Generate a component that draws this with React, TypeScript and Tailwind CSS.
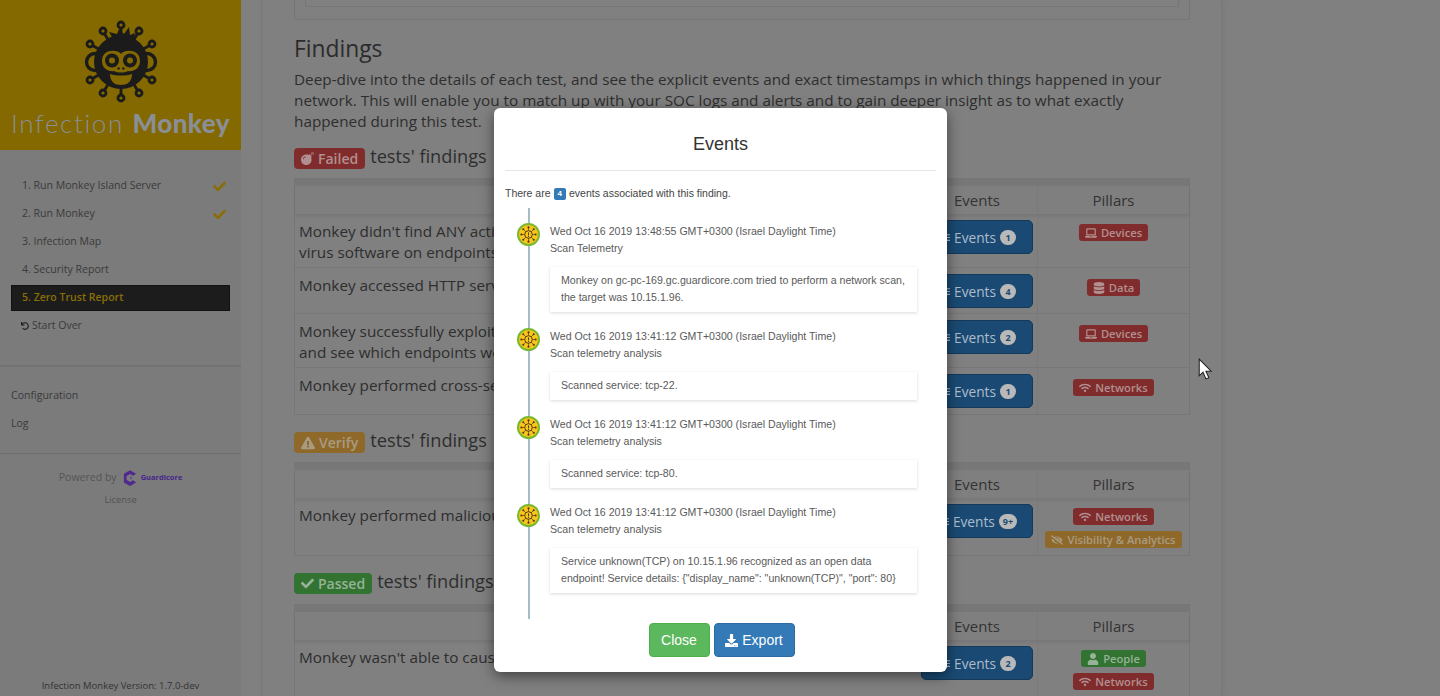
import React from 'react';
import {
  FaBomb,
  FaCheck,
  FaDatabase,
  FaDownload,
  FaExclamationTriangle,
  FaEyeSlash,
  FaLaptop,
  FaList,
  FaUndo,
  FaUser,
  FaWifi,
} from 'react-icons/fa';

const NODES = [
  [0, -37],
  [-18, -31],
  [18, -31],
  [-31, -18],
  [31, -18],
  [-31, 18],
  [31, 18],
  [-18, 31],
  [18, 31],
  [0, 36],
];

function MonkeyLogo() {
  const ink = '#1b1b1b';
  const bg = '#846800';
  return (
    <svg viewBox="-42 -42 84 84" className="w-[84px] h-[84px]">
      {NODES.map(([x, y]) => (
        <g key={`${x}${y}`}>
          <line x1={0} y1={0} x2={x} y2={y} stroke={ink} strokeWidth="2.8" />
          <circle cx={x} cy={y} r="3" fill={bg} stroke={ink} strokeWidth="2.8" />
        </g>
      ))}
      <circle cx={-26} cy={0} r="8.5" fill={bg} stroke={ink} strokeWidth="3.4" />
      <circle cx={26} cy={0} r="8.5" fill={bg} stroke={ink} strokeWidth="3.4" />
      <circle cx={0} cy={0} r="27" fill={ink} />
      <path d="M-9 -25 L-12 -30 L-4 -28 L-2 -33 L3 -28 L8 -35 L9 -27 L14 -29 L13 -21 Z" fill={ink} />
      <path
        d="M0 -8 C-4 -13 -19 -13 -19 -1 C-19 7 -12 10 -7 9 C-3 11 3 11 7 9 C12 10 19 7 19 -1 C19 -13 4 -13 0 -8 Z"
        fill={bg}
      />
      <circle cx={-9} cy={-1.5} r="7" fill={ink} />
      <circle cx={9} cy={-1.5} r="7" fill={ink} />
      <circle cx={-9} cy={-1.5} r="3" fill={bg} />
      <circle cx={9} cy={-1.5} r="3" fill={bg} />
      <circle cx={-2.4} cy={6.4} r="1.2" fill={ink} />
      <circle cx={2.4} cy={6.4} r="1.2" fill={ink} />
      <path d="M-11 12 C-5 14 5 14 11 12 C11 20 6 23 0 23 C-6 23 -11 20 -11 12 Z" fill={bg} />
    </svg>
  );
}

function GuardicoreMark() {
  return (
    <svg viewBox="0 0 16 18" className="w-[14px] h-[16px]">
      <path d="M8 0 L15 4 L11.5 6.5 L8 4.5 L4 7 V11 L8 13.5 L11.5 11.5 L15 14 L8 18 L1 14 V4 Z" fill="#4f2a8c" />
      <path d="M8 7 L11 9 L8 11 Z" fill="#6c47a8" />
    </svg>
  );
}

function TelemetryIcon() {
  const spokes = [
    [0, -7.5],
    [5.5, -5.5],
    [7.5, 0],
    [5.5, 5.5],
    [0, 7.5],
    [-5.5, 5.5],
    [-7.5, 0],
    [-5.5, -5.5],
  ];
  return (
    <div className="w-[23px] h-[23px] rounded-full bg-[#fdc51a] border-2 border-[#79b92f] flex items-center justify-center">
      <svg viewBox="-10 -10 20 20" className="w-[19px] h-[19px]">
        {spokes.map(([x, y]) => (
          <g key={`${x}${y}`}>
            <line x1={0} y1={0} x2={x} y2={y} stroke="#5b5320" strokeWidth="0.8" />
            <circle cx={x} cy={y} r="1.1" fill="#3f3a1c" />
          </g>
        ))}
        <circle cx={0} cy={0} r="4" fill="#fdc51a" stroke="#3f3a1c" strokeWidth="1" />
        <line x1={0} y1={-2.2} x2={0} y2={1} stroke="#3f3a1c" strokeWidth="1" />
        <circle cx={0} cy={2.3} r="0.6" fill="#3f3a1c" />
      </svg>
    </div>
  );
}

function NavItem({ label, done }: { label: string; done?: boolean }) {
  return (
    <div className="h-[28px] flex items-center justify-between pl-[22px] pr-[15px]">
      <span>{label}</span>
      {done && <FaCheck className="text-[#8a6e05] text-[13px]" />}
    </div>
  );
}

function Sidebar() {
  return (
    <aside className="w-[241px] h-full flex-none flex flex-col bg-[#7b7b7b] text-[10.55px] text-[#3a3a3a]">
      <div className="h-[150px] flex-none bg-[#846800] flex flex-col items-center pt-[20px]">
        <MonkeyLogo />
        <div className="mt-[3px] text-[26px] leading-[32px] tracking-[1.6px] whitespace-nowrap text-[#8a8f97] font-['Lato',sans-serif] font-light">
          Infection <span className="font-black tracking-[0.4px]">Monkey</span>
        </div>
      </div>
      <div className="pt-[22px]">
        <NavItem label="1. Run Monkey Island Server" done />
        <NavItem label="2. Run Monkey" done />
        <NavItem label="3. Infection Map" />
        <NavItem label="4. Security Report" />
        <div className="mx-[11px] h-[26px] my-px pl-[10px] flex items-center bg-[#1c1c1c] border border-[#111] text-[#8a6e05] font-semibold">
          5. Zero Trust Report
        </div>
        <div className="h-[28px] flex items-center gap-[3px] pl-[21px]">
          <FaUndo className="text-[8px] text-[#1f1f1f]" />
          <span>Start Over</span>
        </div>
      </div>
      <div className="mt-[25px] border-t-2 border-[#727272] pt-[15px] pb-[15px] pl-[11px]">
        <div className="h-[28px] flex items-center">Configuration</div>
        <div className="h-[28px] flex items-center">Log</div>
      </div>
      <div className="border-t border-[#6e6e6e] pt-[16px] flex flex-col items-center">
        <div className="h-[16px] flex items-center text-[#555]">
          Powered by
          <span className="ml-[6px] mr-[4px]">
            <GuardicoreMark />
          </span>
          <span className="text-[7.5px] font-bold text-[#47258a]">Guardicore</span>
        </div>
        <div className="mt-[7px] text-[9.3px] text-[#525252]">License</div>
      </div>
      <div className="mt-auto pb-[3px] text-center text-[9.5px] text-[#333]">Infection Monkey Version: 1.7.0-dev</div>
    </aside>
  );
}

type Pillar = 'Devices' | 'Data' | 'Networks' | 'Visibility & Analytics' | 'People';

function PillarBadge({ name }: { name: Pillar }) {
  const color =
    name === 'People'
      ? 'bg-[#327332] text-[#97b297]'
      : name === 'Visibility & Analytics'
        ? 'bg-[#8f692a] text-[#a99b82]'
        : 'bg-[#812c2c] text-[#b09090]';
  const icon =
    name === 'Devices' ? (
      <FaLaptop />
    ) : name === 'Data' ? (
      <FaDatabase />
    ) : name === 'Networks' ? (
      <FaWifi />
    ) : name === 'People' ? (
      <FaUser />
    ) : (
      <FaEyeSlash />
    );
  return (
    <span className={`${color} h-[17px] px-[6px] rounded-[3px] flex items-center gap-[4px] text-[11.2px] font-semibold whitespace-nowrap`}>
      <span className="text-[12px]">{icon}</span>
      {name}
    </span>
  );
}

type Row = {
  text: string;
  count: string;
  pillars: Pillar[];
  height: string;
  tight?: boolean;
};

function FindingsTable({ rows, className }: { rows: Row[]; className: string }) {
  return (
    <div className={`${className} border border-[#767676] text-[15.3px] leading-[21px] text-[#2e2e2e]`}>
      <div className="h-[7px] bg-[#777777]" />
      <div className="h-[29px] grid grid-cols-[622px_120px_1fr] bg-[#7f7f7f] border-b border-[#777777] shadow-[0_2px_3px_rgba(0,0,0,0.06)]">
        <div />
        <div className="flex items-center justify-center text-[15px] text-[#333]">Events</div>
        <div className="flex items-center justify-center text-[15px] text-[#333] border-l border-[#7a7a7a]">Pillars</div>
      </div>
      {rows.map((row, i) => (
        <div key={row.text} className={`${row.height} grid grid-cols-[622px_120px_1fr] ${i > 0 ? 'border-t border-[#787878]' : ''}`}>
          <div className={`pl-[4px] ${row.tight ? 'pt-[6px]' : 'pt-[7px]'}`}>{row.text}</div>
          <div className={`flex justify-center ${row.tight ? 'pt-[5px]' : 'pt-[6px]'}`}>
            <div className="w-[112px] h-[34px] pl-[3px] rounded-[5px] bg-[#1a4a73] border border-[#14395a] flex items-center justify-center gap-[4px] text-[13.7px] text-[#aebccb]">
              <FaList className="text-[9px]" />
              Events
              <span className="min-w-[16px] h-[15px] px-[4px] rounded-full bg-[#b9b9b9] text-[#1a4a73] text-[9px] font-bold flex items-center justify-center">
                {row.count}
              </span>
            </div>
          </div>
          <div className={`flex flex-col items-center gap-[6px] border-l border-[#7a7a7a] ${row.tight ? 'pt-[9px]' : 'pt-[11px]'}`}>
            {row.pillars.map((p) => (
              <PillarBadge key={p} name={p} />
            ))}
          </div>
        </div>
      ))}
    </div>
  );
}

function SectionTitle({ color, icon, label, className }: { color: string; icon: React.ReactNode; label: string; className: string }) {
  return (
    <div className={`${className} h-[21px] flex items-center gap-[5px] text-[18.2px] text-[#2e2e2e]`}>
      <span className={`${color} h-[21px] px-[7px] rounded-[4px] flex items-center gap-[4px] text-[14px] font-semibold`}>
        {icon}
        {label}
      </span>
      <span className="mb-[3px]">tests' findings</span>
    </div>
  );
}

function Main() {
  return (
    <main className="w-[960px] ml-[21px] h-full flex-none overflow-hidden border-x border-[#7a7a7a] px-[31px] shadow-[0_0_6px_rgba(0,0,0,0.08)]">
      <div className="h-[20px] border border-t-0 border-[#757575] rounded-b-[3px] px-[10px]">
        <div className="h-[7px] border border-t-0 border-[#767676]" />
      </div>
      <h2 className="mt-[12px] text-[22.8px] leading-[33px] text-[#2b2b2b]">Findings</h2>
      <p className="mt-[4px] text-[15.3px] leading-[21px] text-[#2e2e2e]">
        Deep-dive into the details of each test, and see the explicit events and exact timestamps in which things happened in your
        network. This will enable you to match up with your SOC logs and alerts and to gain deeper insight as to what exactly
        happened during this test.
      </p>
      <SectionTitle className="mt-[16px]" color="bg-[#812c2c] text-[#b09090]" icon={<FaBomb className="text-[13px]" />} label="Failed" />
      <FindingsTable
        className="mt-[9px]"
        rows={[
          {
            text: "Monkey didn't find ANY active endpoint security processes. Install and activate anti-virus software on endpoints.",
            count: '1',
            pillars: ['Devices'],
            height: 'h-[52px]',
            tight: true,
          },
          { text: 'Monkey accessed HTTP servers. Limit access to data by encrypting it in-transit.', count: '4', pillars: ['Data'], height: 'h-[46px]' },
          {
            text: 'Monkey successfully exploited endpoints. Check IDS/IPS logs to see activity recognized and see which endpoints were compromised.',
            count: '2',
            pillars: ['Devices'],
            height: 'h-[54px]',
          },
          { text: 'Monkey performed cross-segment communication. Check firewall rules and logs.', count: '1', pillars: ['Networks'], height: 'h-[47px]' },
        ]}
      />
      <SectionTitle className="mt-[17px]" color="bg-[#8f692a] text-[#a99b82]" icon={<FaExclamationTriangle className="text-[14px]" />} label="Verify" />
      <FindingsTable
        className="mt-[9px]"
        rows={[
          {
            text: 'Monkey performed malicious actions in the network. Check SOC logs and alerts.',
            count: '9+',
            pillars: ['Networks', 'Visibility & Analytics'],
            height: 'h-[56px]',
            tight: true,
          },
        ]}
      />
      <SectionTitle className="mt-[17px]" color="bg-[#327332] text-[#97b297]" icon={<FaCheck className="text-[13px]" />} label="Passed" />
      <FindingsTable
        className="mt-[10px]"
        rows={[
          {
            text: "Monkey wasn't able to cause denial of service.",
            count: '2',
            pillars: ['People', 'Networks'],
            height: 'h-[70px]',
            tight: true,
          },
        ]}
      />
    </main>
  );
}

type EventItem = { time: string; title: string; lines: string[] };

const EVENTS: EventItem[] = [
  {
    time: 'Wed Oct 16 2019 13:48:55 GMT+0300 (Israel Daylight Time)',
    title: 'Scan Telemetry',
    lines: ['Monkey on gc-pc-169.gc.guardicore.com tried to perform a network scan,', 'the target was 10.15.1.96.'],
  },
  {
    time: 'Wed Oct 16 2019 13:41:12 GMT+0300 (Israel Daylight Time)',
    title: 'Scan telemetry analysis',
    lines: ['Scanned service: tcp-22.'],
  },
  {
    time: 'Wed Oct 16 2019 13:41:12 GMT+0300 (Israel Daylight Time)',
    title: 'Scan telemetry analysis',
    lines: ['Scanned service: tcp-80.'],
  },
  {
    time: 'Wed Oct 16 2019 13:41:12 GMT+0300 (Israel Daylight Time)',
    title: 'Scan telemetry analysis',
    lines: ['Service unknown(TCP) on 10.15.1.96 recognized as an open data', 'endpoint! Service details: {"display_name": "unknown(TCP)", "port": 80}'],
  },
];

function EventsModal() {
  return (
    <div className="absolute left-[494px] top-[108px] w-[453px] h-[564px] rounded-[6px] bg-white shadow-[0_4px_14px_rgba(0,0,0,0.5)] px-[11px] font-['Liberation_Sans',Arial,sans-serif] text-[#333]">
      <h4 className="h-[63px] flex items-center justify-center pt-[11px] text-[18px] border-b border-[#e5e5e5]">Events</h4>
      <div className="h-[15px] mt-[15px] flex items-center text-[10.5px] text-[#444]">
        There are
        <span className="mx-[3px] h-[12px] px-[4px] rounded-[2px] bg-[#337ab7] text-white text-[8px] font-bold flex items-center">4</span>
        events associated with this finding.
      </div>
      <div className="relative mt-[7px] h-[411px] pl-[45px] pt-[14.5px] text-[10.6px] text-[#5a5a5a]">
        <div className="absolute left-[23px] top-0 bottom-0 w-[2px] bg-[#a5bcc7]" />
        {EVENTS.map((e) => (
          <div key={e.time + e.lines[0]} className="relative mb-[16px]">
            <div className="absolute left-[-33px] top-0">
              <TelemetryIcon />
            </div>
            <div className="leading-[17.5px]">{e.time}</div>
            <div className="leading-[17.5px]">{e.title}</div>
            <div className="mt-[9px] w-[367px] py-[5.5px] px-[11px] leading-[17px] bg-white shadow-[0_1px_3px_rgba(0,0,0,0.15)]">
              {e.lines.map((l) => (
                <div key={l} className="whitespace-nowrap">
                  {l}
                </div>
              ))}
            </div>
          </div>
        ))}
      </div>
      <div className="mt-[4px] pl-[2px] flex justify-center gap-[4px] text-[14px] text-white">
        <button className="w-[61px] h-[34px] rounded-[4px] bg-[#5cb85c] border border-[#4cae4c]">Close</button>
        <button className="w-[81px] h-[34px] rounded-[4px] bg-[#337ab7] border border-[#2e6da4] flex items-center justify-center gap-[4px]">
          <FaDownload className="text-[13px]" />
          Export
        </button>
      </div>
    </div>
  );
}

function Cursor() {
  return (
    <svg viewBox="0 0 14 22" className="absolute left-[1198px] top-[358px] w-[15px] h-[23px]">
      <path d="M1 1 V17 L4.6 13.6 L7.4 20 L10.2 18.8 L7.4 12.6 H12.4 Z" fill="#fff" stroke="#222" strokeWidth="1" />
    </svg>
  );
}

export default function App() {
  return (
    <div className="relative w-[1440px] h-[696px] overflow-hidden flex bg-[#808080] font-['Open_Sans',sans-serif]">
      <Sidebar />
      <Main />
      <EventsModal />
      <Cursor />
    </div>
  );
}
